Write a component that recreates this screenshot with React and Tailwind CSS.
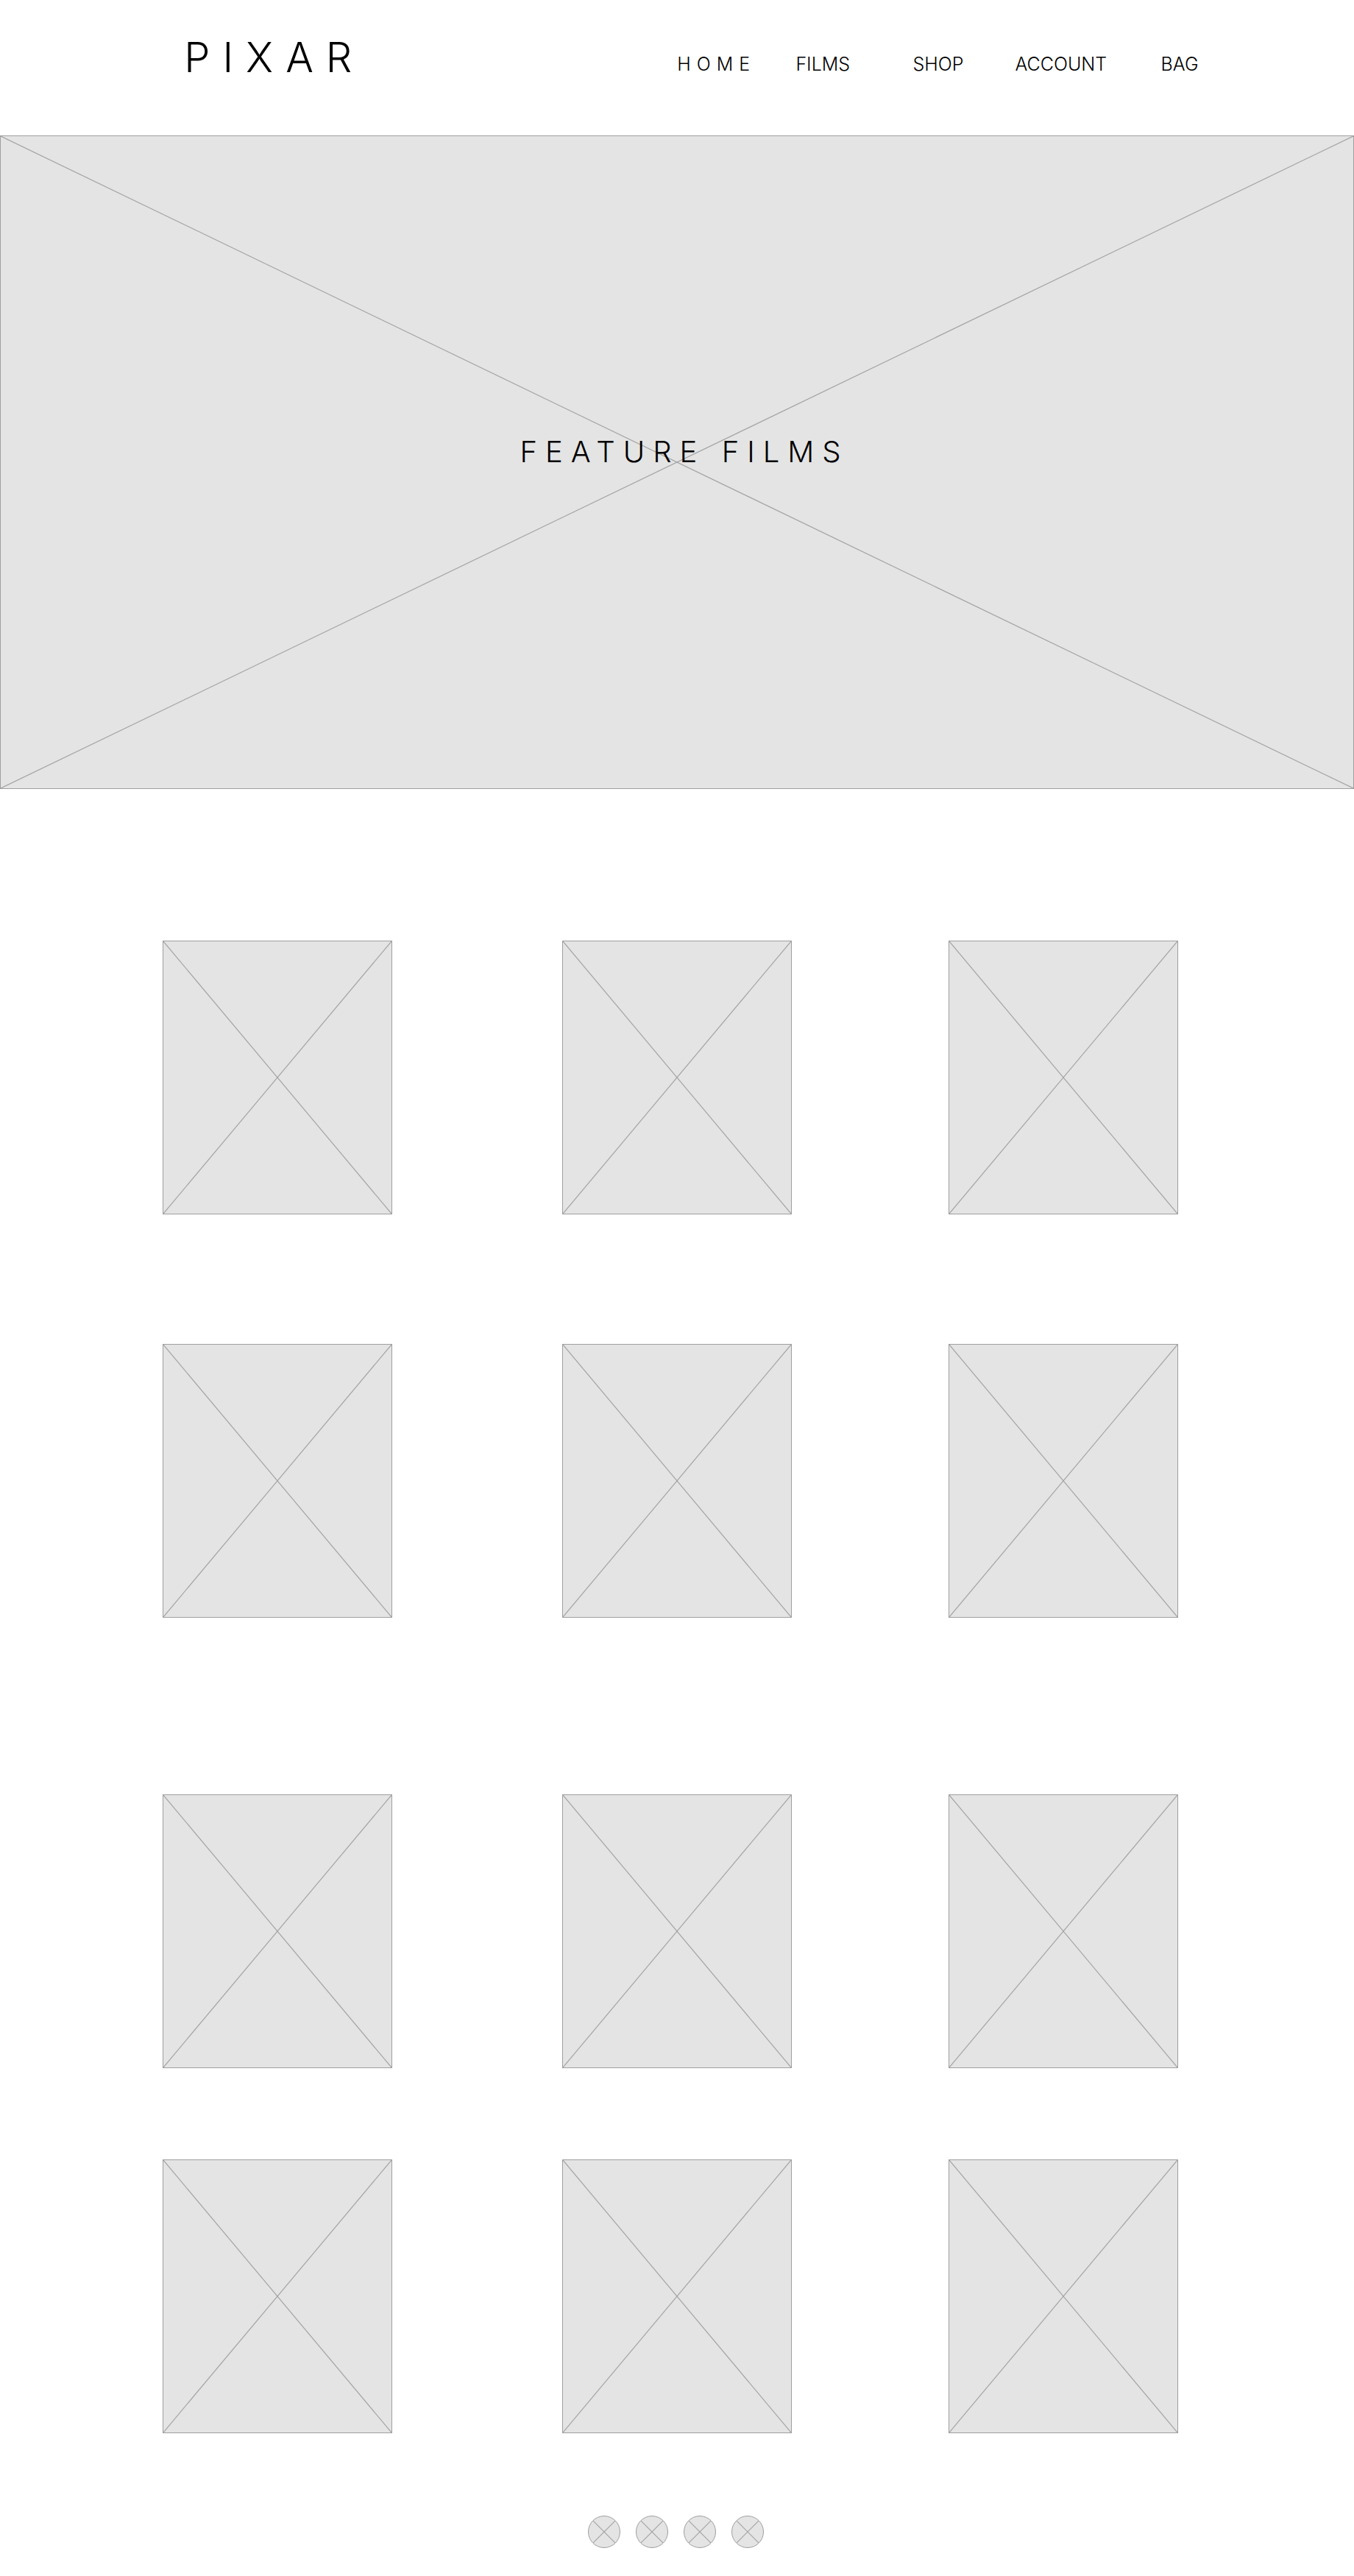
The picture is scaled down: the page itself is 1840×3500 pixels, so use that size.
const navLinks = ["HOME", "FILMS", "SHOP", "ACCOUNT", "BAG"];

const filmRows = [
  { id: "row-1", spacing: "mt-[206px]" },
  { id: "row-2", spacing: "mt-[176px]" },
  { id: "row-3", spacing: "mt-[240px]" },
  { id: "row-4", spacing: "mt-[124px]" },
];

const socialLinks = ["Social 1", "Social 2", "Social 3", "Social 4"];

/* Diagonal cross that fills its parent */
function Cross() {
  return (
    <svg className="block h-full w-full" stroke="#a4a4a4" strokeWidth="1.2" aria-hidden="true">
      <line x1="0" y1="0" x2="100%" y2="100%" />
      <line x1="100%" y1="0" x2="0" y2="100%" />
    </svg>
  );
}

function FilmCard({ className }) {
  return (
    <a
      href="#film"
      aria-label="Film"
      className={`block aspect-[312/372] overflow-hidden border border-[#9f9f9f] bg-[#e4e4e4] ${className}`}
    >
      <Cross />
    </a>
  );
}

export default function App() {
  return (
    <div className="min-h-screen bg-white font-['Inter','Open_Sans',sans-serif] text-black">
      <header className="flex h-[184px] items-start pt-[43px] pr-[11%] pl-[13.6%]">
        <a href="#home" className="text-[56px] leading-[70px] font-light tracking-[17px]">
          PIXAR
        </a>
        <nav className="ml-auto grid w-[51.7%] grid-cols-[161fr_159fr_139fr_198fr_60fr] pt-[27px] text-[25px] leading-[34px] font-light">
          {navLinks.map((label) => (
            <a
              key={label}
              href={`#${label.toLowerCase()}`}
              className={label === "HOME" ? "tracking-[8px]" : ""}
            >
              {label}
            </a>
          ))}
        </nav>
      </header>

      <main>
        <section className="grid aspect-[1840/888] w-full border border-[#9f9f9f] bg-[#e4e4e4]">
          <div className="col-start-1 row-start-1 overflow-hidden">
            <Cross />
          </div>
          <h1 className="col-start-1 row-start-1 self-center pb-7 pl-5 text-center text-[40px] leading-[48px] font-light tracking-[11px]">
            FEATURE FILMS
          </h1>
        </section>

        <section aria-label="Films" className="pr-[13%] pl-[12%]">
          {filmRows.map((row) => (
            <div
              key={row.id}
              className={`grid grid-cols-[312fr_231fr_312fr_213fr_312fr] ${row.spacing}`}
            >
              <FilmCard className="col-start-1" />
              <FilmCard className="col-start-3" />
              <FilmCard className="col-start-5" />
            </div>
          ))}
        </section>
      </main>

      <footer className="flex justify-center gap-[21px] pt-28 pr-1 pb-[38px]">
        {socialLinks.map((label) => (
          <a
            key={label}
            href="#social"
            aria-label={label}
            className="block size-11 overflow-hidden rounded-full border border-[#9f9f9f] bg-[#e4e4e4]"
          >
            <Cross />
          </a>
        ))}
      </footer>
    </div>
  );
}
